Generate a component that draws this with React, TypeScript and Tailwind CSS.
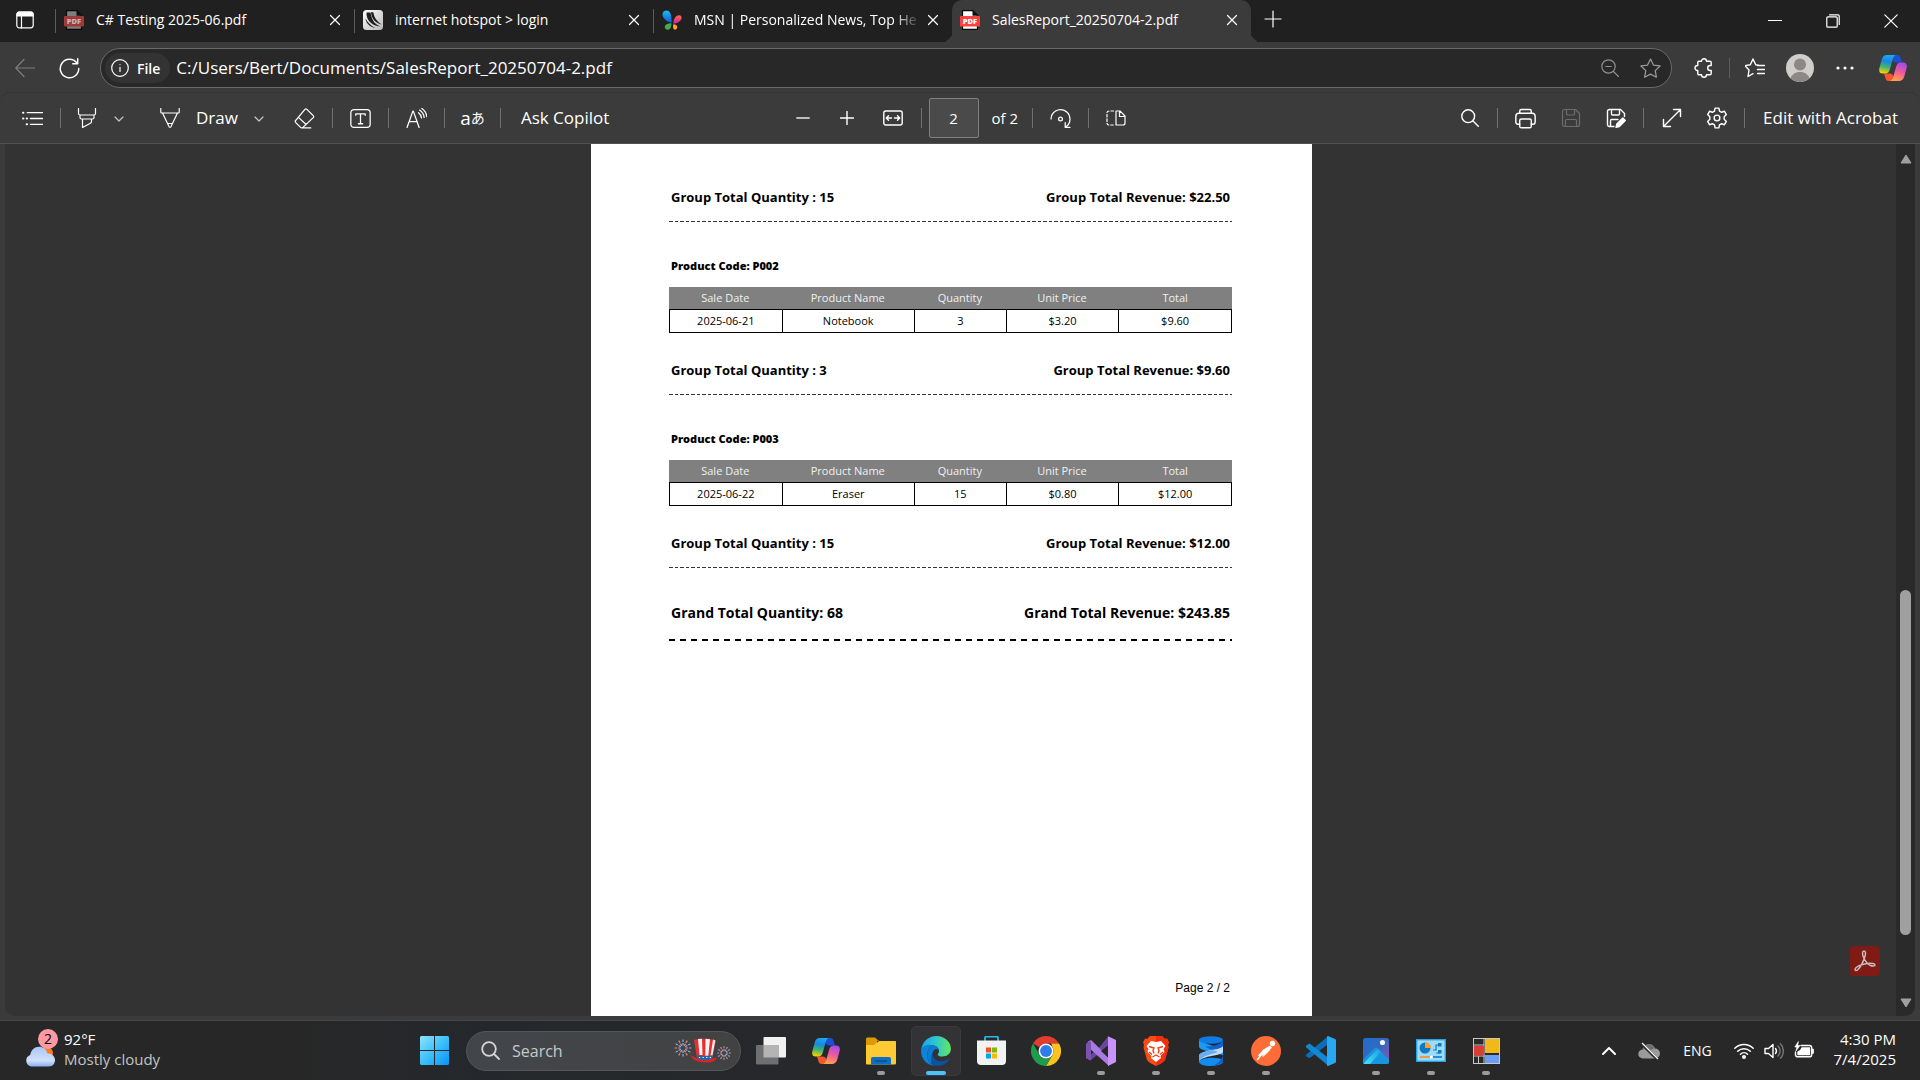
import type { ReactNode } from 'react';

type IconProps = { children: ReactNode; size?: string; box?: string; className?: string };

function Icon({ children, size = 'size-5', box = '0 0 20 20', className = '' }: IconProps) {
  return (
    <svg
      viewBox={box}
      className={`${size} shrink-0 ${className}`}
      fill="none"
      stroke="currentColor"
      strokeWidth={1.2}
      strokeLinecap="round"
      strokeLinejoin="round"
      aria-hidden="true"
    >
      {children}
    </svg>
  );
}

/* ---------- colour logos ---------- */

function PdfFile({ muted = false }: { muted?: boolean }) {
  const red = muted ? '#9e3a3a' : '#fb4141';
  const paper = muted ? '#7d7d7d' : '#ffffff';
  return (
    <svg viewBox="0 0 20 20" className="size-5 shrink-0" aria-hidden="true">
      <path d="M2.500.7h10.300l4.700 4.600v14H2.500z" fill={paper} stroke="#0a0a0a" strokeWidth="1.200" />
      <path d="M12.500.5l5.200 5.200h-5.200z" fill="#111" />
      <rect x="0" y="6" width="20" height="10.500" rx="1" fill={red} />
      <text x="10" y="13.700" textAnchor="middle" fontSize="7.500" fontWeight="800" fontFamily="Open Sans, sans-serif" fill={muted ? '#c9b4b4' : '#fff'}>
        PDF
      </text>
    </svg>
  );
}

function RouterIcon() {
  return (
    <svg viewBox="0 0 20 20" className="size-5 shrink-0" aria-hidden="true">
      <defs>
        <linearGradient id="router" x1="0" y1="0" x2="1" y2="1">
          <stop offset="0" stopColor="#fff" />
          <stop offset="1" stopColor="#b8b8b8" />
        </linearGradient>
      </defs>
      <rect width="20" height="20" rx="3.500" fill="url(#router)" />
      <path d="M3.500 2.500c-.5 7 4.500 13 14 14-5-2-8.500-5-10-14zM8 2c.5 7 4 10.500 10.500 12.500C14.500 11.500 11 8 10.500 2.500zM2.500 8.500c.5 4.500 4 8.500 10 9.500-4-1.800-7.500-5-10-9.500z" fill="#1e1e1e" />
    </svg>
  );
}

function MsnIcon() {
  return (
    <svg viewBox="0 0 21 21" className="size-5 shrink-0" aria-hidden="true">
      <defs>
        <linearGradient id="msnb" x1="0" y1="0" x2="0" y2="1">
          <stop offset="0" stopColor="#19c0f0" />
          <stop offset="1" stopColor="#1457d8" />
        </linearGradient>
        <linearGradient id="msnp" x1="0" y1="0" x2="0" y2="1">
          <stop offset="0" stopColor="#ff6a3c" />
          <stop offset="1" stopColor="#d31fb0" />
        </linearGradient>
      </defs>
      <path d="M5 .5C8.500.5 10 5 10.200 13 6 13.500.5 9 .5 4.500.5 2 2.500.5 5 .5z" fill="url(#msnb)" />
      <path d="M18 5.500c2 0 3 1.500 2.500 3.500-.8 3-5 5.500-8.500 5.300C12 10 14 5.500 18 5.500z" fill="url(#msnp)" />
      <path d="M9.800 14c.3 4-1 6.700-3.800 6.700-2 0-3.300-1.500-3-3.300.4-2.200 3.500-3.400 6.800-3.400z" fill="#3fae49" />
      <path d="M12 15c2.800 0 4.300 1.500 4 3.500-.2 1.600-1.700 2.500-3 2-1.600-.5-1.700-2.800-1-5.500z" fill="#ffa51f" />
    </svg>
  );
}

function CopilotIcon({ id, size }: { id: string; size: string }) {
  return (
    <svg viewBox="0 0 28 26" className={`${size} shrink-0`} aria-hidden="true">
      <defs>
        <linearGradient id={`${id}a`} x1=".5" y1="0" x2=".3" y2="1">
          <stop offset="0" stopColor="#1aa9f3" />
          <stop offset=".35" stopColor="#1987e0" />
          <stop offset=".65" stopColor="#43b56e" />
          <stop offset="1" stopColor="#ffd400" />
        </linearGradient>
        <linearGradient id={`${id}b`} x1=".7" y1="0" x2=".4" y2="1">
          <stop offset="0" stopColor="#a24bea" />
          <stop offset=".5" stopColor="#ef5aa0" />
          <stop offset="1" stopColor="#ffa24d" />
        </linearGradient>
      </defs>
      <path d="M13 0h5.500c2 0 2.600 1.300 3.200 3.300L23 7.500h-5.500c-2.500 0-3.500-1.500-4.500-4z" fill="#1b4fd6" />
      <path d="M14 26H9.500c-2 0-2.600-1.300-3.200-3.300L5 18.500h5.500c2.500 0 3.500 1.500 4.500 4z" fill="#f4572e" />
      <path d="M8 0h9c-1.800.6-2.600 2-3.200 4l-3 10.500c-.8 2.700-2 4-4.800 4H3.500C1 18.500-.3 16.500.3 13.500l2.500-9.300C3.600 1.500 5.300 0 8 0z" fill={`url(#${id}a)`} />
      <path d="M20 26h-9c1.800-.6 2.600-2 3.200-4l3-10.500c.8-2.700 2-4 4.800-4h2.500c2.500 0 3.800 2 3.200 5l-2.500 9.300C24.400 24.500 22.700 26 20 26z" fill={`url(#${id}b)`} />
    </svg>
  );
}

function StartIcon() {
  return (
    <svg viewBox="0 0 29 29" className="size-[29px]" aria-hidden="true">
      <defs>
        <linearGradient id="win" x1="0" y1="0" x2="29" y2="29" gradientUnits="userSpaceOnUse">
          <stop offset="0" stopColor="#8fe3ff" />
          <stop offset=".5" stopColor="#3cc0fa" />
          <stop offset="1" stopColor="#0a93f8" />
        </linearGradient>
      </defs>
      <path d="M1 0h13v14H0V1zM15 0h13l1 1v13H15zM0 15h14v14H1l-1-1zM15 15h14v13l-1 1H15z" fill="url(#win)" />
    </svg>
  );
}

function HatIcon() {
  const rays = [0, 30, 60, 90, 120, 150, 180, 210, 240, 270, 300, 330];
  return (
    <svg viewBox="0 0 58 28" className="h-7 w-[58px]" aria-hidden="true">
      {rays.map((a, i) => (
        <g key={a}>
          <path d="M9 8.500V1.500" transform={`rotate(${a} 9 11)`} stroke={i % 2 ? '#e58a86' : '#7ab2e8'} strokeWidth="1.200" strokeDasharray="2.500 1" />
          <path d="M50 14V8.500" transform={`rotate(${a} 50 16)`} stroke={i % 2 ? '#e58a86' : '#7ab2e8'} strokeWidth="1.100" strokeDasharray="2 .8" />
        </g>
      ))}
      <path d="M16 17c3 5 20 7 27 3-1 4-5 6-12 5.500C22 25 17 22 16 17z" fill="#d92424" />
      <path d="M20 3c5-2 17-1.500 22 .5L38 22c-5 2-10 1.500-15-.5z" fill="#e53030" />
      <path d="M24 2l1.500 16h3L28 1.700zM31.500 1.700l-.2 17h3l1.700-16.500zM39 2.500L36.500 19l1.800.2 3-15.700z" fill="#f5f2f5" />
      <path d="M22.400 17.500c5 2 11 2 16.400.5L38 22c-5 2-10 1.500-15-.5z" fill="#2a62a8" />
      <path d="M25 20.500h12" stroke="#fff" strokeWidth="1.200" strokeDasharray="1.200 2.400" />
    </svg>
  );
}

function TaskViewIcon() {
  return (
    <svg viewBox="0 0 30 28" className="h-7 w-[30px]" aria-hidden="true">
      <rect x="7.500" y="0" width="22.500" height="20.500" rx="1" fill="#f1f1f1" />
      <rect x="0" y="8" width="22.500" height="19.500" rx="1" fill="#6f6f6f" />
      <path d="M7.500 8h15v12.500h-15z" fill="#b4b4b4" />
    </svg>
  );
}

function FolderIcon() {
  return (
    <svg viewBox="0 0 30 28" className="h-7 w-[30px]" aria-hidden="true">
      <path d="M0 2C0 1 .6.5 1.500.5H9L13 4h-2v6H0z" fill="#dc9a04" />
      <path d="M0 8h8l5-4h16c.7 0 1 .4 1 1v21c0 .8-.4 1.500-1.200 1.500H1.200C.4 27.500 0 27 0 26z" fill="#fdc934" />
      <path d="M5 27.500V22c0-1.300.8-2 2-2h16c1.200 0 2 .7 2 2v5.500z" fill="#0d6fc4" />
      <path d="M9 24h12" stroke="#0a4e94" strokeWidth="1.400" />
    </svg>
  );
}

function EdgeIcon() {
  return (
    <svg viewBox="0 0 256 256" className="size-[30px]" aria-hidden="true">
      <defs>
        <linearGradient id="edg1" x1="0" y1="0" x2="1" y2="0">
          <stop offset="0" stopColor="#1aa3ea" />
          <stop offset=".5" stopColor="#30c6cd" />
          <stop offset="1" stopColor="#62e95a" />
        </linearGradient>
      </defs>
      <path d="M2 118C10 48 66 1 130 1c72 0 125 50 125 108 0 44-36 66-72 66-26 0-40-10-40-18 0-7 11-12 11-30 0-24-24-47-58-47C48 80 14 100 2 118z" fill="url(#edg1)" />
      <path d="M96 80c-26 18-42 50-42 84 0 46 32 86 72 90C56 256 0 198 0 128 2 92 40 74 72 74c10 0 18 2 24 6z" fill="#0d83da" />
      <path d="M96 80c34 0 58 23 58 47-4-14-20-22-34-16-24 10-38 84 30 102 36 9 66-4 86-16 4-2 7 1 4 6-24 38-64 55-114 51-40-4-72-44-72-90 0-34 16-66 42-84z" fill="#0d51a3" />
      <path d="M96 80c-26 18-42 50-42 84 0 30 14 56 36 74-8-50-4-100 30-126 12-4 28 0 34 15 0-24-24-47-58-47z" fill="#0c7cd0" />
    </svg>
  );
}

function StoreIcon() {
  return (
    <svg viewBox="0 0 29 29" className="size-[29px]" aria-hidden="true">
      <path d="M8 6V1.800C8 1 8.400.7 9 .7h11c.6 0 1 .4 1 1.100V6" fill="none" stroke="#2ab8ee" strokeWidth="1.800" />
      <path d="M0 4.500h29V25c0 2.500-1.500 4-4 4H4c-2.500 0-4-1.500-4-4z" fill="#f2f2f2" />
      <path d="M9 11.500h5v5H9z" fill="#f25022" />
      <path d="M15 11.500h5v5h-5z" fill="#7fba00" />
      <path d="M9 17.500h5v5H9z" fill="#00a4ef" />
      <path d="M15 17.500h5v5h-5z" fill="#ffb900" />
    </svg>
  );
}

function ChromeIcon() {
  return (
    <svg viewBox="0 0 48 48" className="size-[30px]" aria-hidden="true">
      <path d="M24 0a24 24 0 0 1 20.800 12H24a12 12 0 0 0-10.400 6L3.200 12A24 24 0 0 1 24 0z" fill="#e33b2e" />
      <path d="M44.800 12A24 24 0 0 1 24 48l10.400-18A12 12 0 0 0 34.400 18l-2-6z" fill="#fcc31e" />
      <path d="M24 48A24 24 0 0 1 3.200 12l10.400 18A12 12 0 0 0 27 35.600L34.400 30z" fill="#1f9d4d" />
      <circle cx="24" cy="24" r="12" fill="#fff" />
      <circle cx="24" cy="24" r="9.500" fill="#2f7de9" />
    </svg>
  );
}

function VisualStudioIcon() {
  return (
    <svg viewBox="0 0 30 30" className="size-[30px]" aria-hidden="true">
      <path d="M0 8l3-3 9 8L22 .5V10L4.500 24.500 0 22z" fill="#6a45a0" />
      <path d="M4.500 11.500V19l4-3.800z" fill="#272727" />
      <path d="M2 5.500L5 4l18 17.500V30L2 11z" fill="#a77be0" />
      <path d="M0 8l3-3 2 1v17l-1 1.500L0 22z" fill="#7b52ae" />
      <path d="M22 .3L30 4v22l-8 4V21.500V9.500z" fill="#c893fb" />
      <path d="M22 9.500v12L15 15z" fill="#272727" />
    </svg>
  );
}

function BraveIcon() {
  return (
    <svg viewBox="0 0 26 30" className="h-[30px] w-[26px]" aria-hidden="true">
      <path d="M7 0h12l3 3 2-.5 2 4-1 2 .5 3L22 24c-2 3-6 4.500-9 6-3-1.500-7-3-9-6L.5 11.500l.5-3-1-2 2-4 2 .5z" fill="#fb4a14" />
      <path d="M13 0h6l3 3 2-.5 2 4-1 2 .5 3L22 24c-2 3-6 4.500-9 6z" fill="#ee2f0c" />
      <path d="M8 5l5 1 5-1 4.500 5-2 3 1 3-4 4 .5 2L13 26l-5-4 .5-2-4-4 1-3-2-3z" fill="#fff" />
      <path d="M6 10.500l5 1.500-1 2.500 1 3M20 10.500L15 12l1 2.500-1 3M9.500 21l3.500-2 3.500 2M6 16l3 2.500M20 16l-3 2.500" fill="none" stroke="#f4400f" strokeWidth="1.400" />
    </svg>
  );
}

function DatabaseIcon() {
  return (
    <svg viewBox="0 0 24 30" className="h-[30px] w-6" aria-hidden="true">
      <path d="M0 4v6.500C1 16 17 15 24 19.500V14C22 11 14 10.500 6 7z" fill="#1d9bf2" />
      <path d="M24 10v6C22 20 6 19 0 25v-6c2-4 16-4.500 24-9z" fill="#c3dcfb" />
      <path d="M0 19c2-2.500 8-3.800 13-5l6 2C11 18.500 4 20 0 25z" fill="#69aef5" />
      <path d="M24 4v6c-2 3-9 4-13 3.200L6 10.500C14 10.500 21 9 24 4z" fill="#0c62d0" />
      <ellipse cx="12" cy="4" rx="12" ry="3.800" fill="#0f7be4" />
      <path d="M0 25c5-4 19-4 24-1v2c-1 5-23 5.500-24 0z" fill="#128cf0" />
      <path d="M24 19.500V26c-2 2-5 3-9 3.300C20 27 23 23 24 19.500z" fill="#0a5fd0" />
    </svg>
  );
}

function PostmanIcon() {
  return (
    <svg viewBox="0 0 30 30" className="size-[30px]" aria-hidden="true">
      <circle cx="15" cy="15" r="15" fill="#ff6c37" />
      <circle cx="21.500" cy="7.500" r="2.700" fill="#fff" />
      <path d="M12.500 13.500L19 9.500l2 2-6 6.500-5 1.500z" fill="#fff" />
      <path d="M10.500 18.500L6.500 23.500M13 14L8 19.500M18 14l-6 6" fill="none" stroke="#fff" strokeWidth="1.500" strokeLinecap="round" />
    </svg>
  );
}

function VsCodeIcon() {
  return (
    <svg viewBox="0 0 30 30" className="size-[30px]" aria-hidden="true">
      <path d="M.3 18.500L22 .3v8L3.500 22.300.3 20.500c-.5-.5-.5-1.500 0-2z" fill="#0a6fb8" />
      <path d="M.3 9.500L3.500 7.500 22 21.500v8L.3 11.500c-.5-.5-.5-1.500 0-2z" fill="#1288d2" />
      <path d="M22 0l7 3c.7.300 1 .7 1 1.500v21c0 .8-.3 1.200-1 1.500l-7 3c-.8 0-1-.5-1-1V1.500C21 .5 21 .2 22 0z" fill="#27a9f2" />
    </svg>
  );
}

function PhotosIcon() {
  return (
    <svg viewBox="0 0 26 26" className="size-[26px]" aria-hidden="true">
      <defs>
        <linearGradient id="pho" x1="0" y1="0" x2="1" y2="1">
          <stop offset="0" stopColor="#1c6fce" />
          <stop offset=".5" stopColor="#3767bd" />
          <stop offset="1" stopColor="#9a52b0" />
        </linearGradient>
        <linearGradient id="phm" x1="0" y1="1" x2="1" y2="0">
          <stop offset="0" stopColor="#4be0f8" />
          <stop offset="1" stopColor="#1b9fe4" />
        </linearGradient>
      </defs>
      <rect width="26" height="26" rx="2.500" fill="url(#pho)" />
      <path d="M0 22L11 10.500c1.300-1.300 2.700-1.300 4 0L26 21.500V24c0 1.300-.7 2-2 2H2c-1.300 0-2-.7-2-2z" fill="#1596df" />
      <path d="M.5 25.500L14.500 11 18 13.500 7 26H2z" fill="url(#phm)" />
      <circle cx="19.500" cy="4.500" r="2.600" fill="#f4f8ff" />
    </svg>
  );
}

function ControlPanelIcon() {
  return (
    <svg viewBox="0 0 30 23" className="h-[23px] w-[30px]" aria-hidden="true">
      <rect x=".7" y=".7" width="28.600" height="21.600" fill="#9ddcf8" stroke="#25a5e6" strokeWidth="1.400" />
      <circle cx="9" cy="9" r="5.500" fill="#1379bf" />
      <path d="M9 9V3a6 6 0 0 1 6 6z" fill="#ff9c2a" />
      <path d="M17 11h3V6h3M20 14h4" fill="none" stroke="#1379bf" strokeWidth="1.200" />
      <rect x="22" y="4" width="3.500" height="3.500" fill="#1379bf" />
      <rect x="22" y="11" width="3.500" height="3.500" fill="#1379bf" />
      <path d="M4 18h10" stroke="#ff8a1c" strokeWidth="1.600" />
      <path d="M16 18h10" stroke="#1379bf" strokeWidth="1.600" />
      <circle cx="15.500" cy="18" r="1.500" fill="#fff" />
    </svg>
  );
}

function FormsIcon() {
  return (
    <svg viewBox="0 0 27 26" className="h-[26px] w-[27px]" aria-hidden="true">
      <rect x=".5" y=".5" width="26" height="25" fill="#2b2b2b" stroke="#c9c9c9" />
      <path d="M11 0v26M0 7h11M0 18h27M5.500 18v8" stroke="#c9c9c9" />
      <rect x="12" y="1" width="14" height="14" fill="#f0b818" />
      <rect x="1" y="8" width="9.500" height="9.500" fill="#dc3c34" />
      <rect x="12" y="17" width="14" height="8" fill="#6c9df4" />
    </svg>
  );
}

/* ---------- browser frame ---------- */

type TabInfo = { title: string; icon: ReactNode; active?: boolean; fade?: boolean };

const tabs: TabInfo[] = [
  { title: 'C# Testing 2025-06.pdf', icon: <PdfFile muted /> },
  { title: 'internet hotspot > login', icon: <RouterIcon /> },
  { title: 'MSN | Personalized News, Top He', icon: <MsnIcon />, fade: true },
  { title: 'SalesReport_20250704-2.pdf', icon: <PdfFile />, active: true },
];

function Tab({ title, icon, active, fade }: TabInfo) {
  const frame = active
    ? 'rounded-t-[10px] bg-[#3b3b3b] before:absolute before:bottom-0 before:-left-2.5 before:size-2.5 before:rounded-br-[10px] before:shadow-[4px_4px_0_#3b3b3b] after:absolute after:-right-2.5 after:bottom-0 after:size-2.5 after:rounded-bl-[10px] after:shadow-[-4px_4px_0_#3b3b3b]'
    : '';
  return (
    <div className={`relative flex h-full w-[299px] min-w-0 items-center overflow-y-clip pb-0.5 ${frame}`}>
      {!active && <span className="mt-0.5 h-6 w-px bg-[#5c5c5c]" />}
      <button type="button" className="flex min-w-0 flex-1 items-center gap-3 pl-2 text-left text-[14px] leading-5 whitespace-nowrap">
        {icon}
        <span className={`flex-1 ${fade ? '[mask-image:linear-gradient(to_right,black_88%,transparent)]' : ''}`}>{title}</span>
      </button>
      <button type="button" aria-label={`Close ${title}`} className="mr-[7px] grid h-6 w-6 place-items-center">
        <Icon size="size-3" box="0 0 12 12"><path d="M1.500 1.500l9 9M10.500 1.500l-9 9" /></Icon>
      </button>
    </div>
  );
}

function TabStrip() {
  return (
    <header className="flex h-[42px] shrink-0 items-center">
      <button type="button" aria-label="Workspaces" className="grid h-full w-[55px] place-items-center pr-1.5 pb-0.5">
        <Icon size="size-[18px]" box="0 0 18 18">
          <rect x=".8" y="1.200" width="16.400" height="15.600" rx="2.500" />
          <path d="M1 5h16V3.500C17 2 16.500 1.200 15 1.200H3C1.500 1.200 1 2 1 3.500z" fill="currentColor" />
          <path d="M5.500 5v12" />
        </Icon>
      </button>
      <nav className="flex h-full min-w-0 items-center" aria-label="Tabs">
        {tabs.map((t) => (
          <Tab key={t.title} {...t} />
        ))}
      </nav>
      <button type="button" aria-label="New tab" className="ml-1.5 grid h-8 w-8 place-items-center pb-1">
        <Icon size="size-[18px]" box="0 0 18 18"><path d="M9 1v16M1 9h16" /></Icon>
      </button>
      <div className="ml-auto flex h-full">
        <button type="button" aria-label="Minimize" className="grid w-[58px] place-items-center">
          <Icon size="size-[14px]" box="0 0 14 14"><path d="M.5 6.500h13" /></Icon>
        </button>
        <button type="button" aria-label="Restore" className="grid w-[58px] place-items-center">
          <Icon size="size-[14px]" box="0 0 14 14">
            <rect x=".8" y="2.800" width="10.400" height="10.400" rx="1" />
            <path d="M3.500.8H12c.7 0 1.200.5 1.200 1.200v8.500" />
          </Icon>
        </button>
        <button type="button" aria-label="Close window" className="grid w-[58px] place-items-center">
          <Icon size="size-[14px]" box="0 0 14 14"><path d="M.8.8l12.400 12.400M13.200.8L.8 13.200" /></Icon>
        </button>
      </div>
    </header>
  );
}

function AddressBar() {
  return (
    <div className="flex h-[50px] shrink-0 items-center bg-[#3b3b3b] pt-0.5 pr-[7px] pl-0.5">
      <button type="button" aria-label="Back" className="grid h-9 w-[45px] place-items-center text-[#7c7c7c]">
        <Icon><path d="M19.500 10H1M9 1.500L.8 10 9 18.500" /></Icon>
      </button>
      <button type="button" aria-label="Refresh" className="grid h-9 w-[45px] place-items-center">
        <Icon size="size-[21px]" className="[stroke-width:1.400]"><path d="M18.800 10A8.800 8.800 0 1 1 17 4.700M17.800.8v4.700h-4.700" /></Icon>
      </button>
      <div className="ml-2 flex h-10 min-w-0 flex-1 items-center rounded-full border border-[#6a6a6a] bg-[#282828] pr-px pl-1">
        <button type="button" className="flex h-[30px] items-center gap-2 rounded-full bg-[#333333] pr-2.5 pl-1.5 text-[14px] font-semibold">
          <Icon size="size-[18px]" box="0 0 18 18">
            <circle cx="9" cy="9" r="8.300" />
            <path d="M9 8.300v4.200M9 5.500v.1" />
          </Icon>
          File
        </button>
        <input
          aria-label="Address"
          defaultValue="C:/Users/Bert/Documents/SalesReport_20250704-2.pdf"
          className="ml-1.5 min-w-0 flex-1 bg-transparent text-[17px] leading-6 outline-none"
        />
        <button type="button" aria-label="Zoom out" className="grid h-8 w-10 place-items-center text-[#8f8f8f]">
          <Icon size="size-[18px]" box="0 0 18 18">
            <circle cx="7.500" cy="7.500" r="6.700" />
            <path d="M12.500 12.500l5 5M4.800 7.500h5.400" />
          </Icon>
        </button>
        <button type="button" aria-label="Add to favorites" className="grid h-8 w-10 place-items-center text-[#9a9a9a]">
          <Icon size="size-[21px]"><path d="M10 1l2.800 5.700 6.300.9-4.600 4.400 1.100 6.300L10 15.400l-5.600 2.900L5.500 12 .9 7.600l6.300-.9z" /></Icon>
        </button>
      </div>
      <button type="button" aria-label="Extensions" className="ml-3 grid h-9 w-10 place-items-center">
        <Icon className="[stroke-width:1.400]">
          <path d="M7.500 3.200a2.500 2.500 0 0 1 5 0H16c.7 0 1.200.5 1.200 1.200v3.100h-1a2.500 2.500 0 0 0 0 5h1v3.100c0 .7-.5 1.200-1.200 1.200h-3.500a2.500 2.500 0 0 1-5 0H5c-.7 0-1.200-.5-1.200-1.200V12.500h-.3a2.500 2.500 0 0 1 0-5h.3V4.400c0-.7.5-1.200 1.200-1.200z" />
        </Icon>
      </button>
      <span className="mx-[5px] h-5 w-px bg-[#5c5c5c]" />
      <div className="flex items-center gap-[5px]">
        <button type="button" aria-label="Favorites" className="grid h-9 w-10 place-items-center">
          <Icon className="[stroke-width:1.400]">
            <path d="M13.500 7.200l-2.800-.4L8 1 5.300 6.800 0 7.600l4 4.400-1 6.500 5-2.800M12.500 7.500h7M12.500 11.500h7M12.500 15.500h7" />
          </Icon>
        </button>
        <button type="button" aria-label="Profile" className="grid h-9 w-10 place-items-center">
          <svg viewBox="0 0 28 28" className="size-7" aria-hidden="true">
            <circle cx="14" cy="14" r="14" fill="#d0cecb" />
            <circle cx="14" cy="10.500" r="6" fill="#8b8886" />
            <path d="M4.500 24.200C6.500 19.500 10 18 14 18s7.500 1.500 9.500 6.200A14 14 0 0 1 14 28a14 14 0 0 1-9.500-3.800z" fill="#8b8886" />
          </svg>
        </button>
        <button type="button" aria-label="Settings and more" className="grid h-9 w-10 place-items-center">
          <svg viewBox="0 0 18 4" className="h-1 w-[18px]" fill="currentColor" aria-hidden="true">
            <circle cx="2" cy="2" r="1.600" />
            <circle cx="9" cy="2" r="1.600" />
            <circle cx="16" cy="2" r="1.600" />
          </svg>
        </button>
      </div>
      <button type="button" aria-label="Copilot" className="ml-2 grid h-9 w-10 place-items-center">
        <CopilotIcon id="top" size="h-[26px] w-7" />
      </button>
    </div>
  );
}

/* ---------- PDF toolbar ---------- */

function Divider({ className = 'mx-3' }: { className?: string }) {
  return <span className={`h-5 w-px shrink-0 bg-[#707070] ${className}`} />;
}

function Tool({ label, children, className = 'w-[31px]' }: { label: string; children: ReactNode; className?: string }) {
  return (
    <button type="button" aria-label={label} className={`grid h-8 shrink-0 place-items-center ${className}`}>
      {children}
    </button>
  );
}

const chevron = (
  <Icon size="size-2.5" box="0 0 10 10" className="text-[#c4c4c4]"><path d="M1 4l4 4 4-4" /></Icon>
);

function PdfToolbar() {
  return (
    <div className="grid h-[52px] shrink-0 grid-cols-[1fr_auto_1fr] items-center rounded-t-[10px] border-t border-b border-t-[#363636] border-b-[#525252] bg-[#3b3b3b] text-[17px] leading-6">
      <div className="flex items-center pl-[17px]">
        <Tool label="Contents">
          <Icon size="size-[21px]"><path d="M5 4.500h14.500M8 10h11.500M8 15.500h11.500" /><path d="M1 4.500h.3M1 10h.3M4.500 10h.3M4.500 15.500h.3" strokeWidth="2" /></Icon>
        </Tool>
        <Divider />
        <Tool label="Highlight" className="w-7">
          <Icon><path d="M1.500.5v5c0 1 .5 1.500 1.500 1.500h14c1 0 1.500-.5 1.500-1.500v-5M3 7v2.500c0 1 .5 1.500 1.500 1.500h11c1 0 1.500-.5 1.500-1.500V7M5.500 11v8.500l7.500-4c1-.5 1.500-1 1.500-2V11" /></Icon>
        </Tool>
        <Tool label="Highlight options" className="ml-1.5 w-6">{chevron}</Tool>
        <button type="button" className="ml-7 flex items-center gap-4 px-px">
          <Icon><path d="M.8.5v3.800c0 .5.300.7.700.7h17c.4 0 .7-.2.700-.7V.5M2.500 5l6 12.500c.500 2.500 2.500 2.500 3 0l6-12.500M7.800 15.500h4.400" /></Icon>
          Draw
        </button>
        <Tool label="Draw options" className="ml-2 w-6">{chevron}</Tool>
        <Tool label="Erase" className="ml-[18px] w-[31px]">
          <Icon size="size-[21px]"><path d="M12.300 1.300l6 6c.6.600.6 1.300 0 1.900l-9.500 9c-.8.800-2 .8-2.800 0l-4.300-4.300c-.7-.7-.7-1.500 0-2.200l8.700-10.400c.600-.600 1.300-.600 1.900 0zM4.500 9.200l7 6.500M8 19h8" /></Icon>
        </Tool>
        <Divider />
        <Tool label="Add text">
          <Icon size="size-[21px]"><rect x=".8" y="1.500" width="18.400" height="17" rx="3" /><path d="M5.500 7V5.500h9V7M10 5.500v9.500M8 15h4" /></Icon>
        </Tool>
        <Divider />
        <Tool label="Read aloud">
          <Icon size="size-[21px]"><path d="M1 18.500L6.500 3h.5l5.500 15.500M3 13h7.500M12 4.500c1.500 1.200 2.500 3 2.800 5M13 2c2.500 1.800 4 4 4.300 7M15 .3c2.800 2 4.500 4.500 4.800 8" /></Icon>
        </Tool>
        <Divider />
        <button type="button" aria-label="Translate" className="flex h-8 w-[31px] items-center justify-center font-['Open_Sans','Noto_Sans_CJK_JP',sans-serif]">
          <span className="text-[19px] leading-none">a</span>
          <span className="text-[14px] leading-none">あ</span>
        </button>
        <Divider />
        <button type="button" className="px-2 whitespace-nowrap">Ask Copilot</button>
      </div>

      <div className="flex items-center pr-0.5">
        <Tool label="Zoom out" className="w-8">
          <Icon size="size-3.5" box="0 0 14 14"><path d="M1 7h12" strokeWidth="1.800" stroke="#bdbdbd" /></Icon>
        </Tool>
        <Tool label="Zoom in" className="ml-3 w-8">
          <Icon size="size-3.5" box="0 0 14 14" className="[stroke-width:1.400]"><path d="M7 .5v13M.5 7h13" /></Icon>
        </Tool>
        <Tool label="Fit to width" className="ml-3.5 w-8">
          <Icon className="[stroke-width:1.400]"><rect x=".8" y="3" width="18.400" height="14" rx="2" /><path d="M8.500 10H3.500M5.500 7.800L3.300 10l2.200 2.200M11.500 10h5M14.500 7.800l2.200 2.200-2.200 2.200" /></Icon>
        </Tool>
        <Divider className="mr-[7px] ml-3" />
        <input
          aria-label="Page number"
          defaultValue="2"
          className="h-10 w-[50px] rounded-[2px] border border-[#808080] bg-[#4a4a4a] text-center text-[15px] outline-none"
        />
        <span className="ml-[13px] w-7 text-[15px] whitespace-nowrap">of 2</span>
        <Divider />
        <Tool label="Rotate">
          <Icon size="size-[21px]"><path d="M1 10.500a9 9 0 1 1 14.500 7.200M19 18.500h-4.500v-4.500" /><circle cx="10" cy="10.500" r="1.800" /></Icon>
        </Tool>
        <Divider />
        <Tool label="Page view">
          <Icon><path d="M10 3h4l5 5v7c0 1.200-.8 2-2 2h-7zM13.500 3v5.500H19" /><path d="M7.500 3H3C1.800 3 1 3.800 1 5v10c0 1.200.8 2 2 2h4.500" strokeDasharray="2.500 2" /></Icon>
        </Tool>
      </div>

      <div className="flex items-center justify-end pr-3.5">
        <Tool label="Find">
          <Icon size="size-[18px]" box="0 0 18 18" className="[stroke-width:1.400]"><circle cx="7.200" cy="7.200" r="6.400" /><path d="M12 12l5.300 5.300" /></Icon>
        </Tool>
        <Divider />
        <div className="flex gap-3.5">
          <Tool label="Print">
            <Icon size="size-[21px]" className="[stroke-width:1.350]"><path d="M4.500 5V3c0-.8.500-1.500 1.500-1.500h8c1 0 1.500.7 1.500 1.500v2M4.500 15.500H3c-1.300 0-2.200-1-2.200-2.200V8C.8 6.300 2 5 3.700 5h12.600C18 5 19.200 6.300 19.200 8v5.300c0 1.200-.9 2.200-2.200 2.200h-1.500" /><rect x="4.500" y="10.500" width="11" height="8.300" rx="1.500" /></Icon>
          </Tool>
          <Tool label="Save" className="w-[31px] text-[#6c6c6c]">
            <Icon><path d="M1.500 3.500c0-1.200.8-2 2-2h11l4 4v11c0 1.200-.8 2-2 2h-13c-1.200 0-2-.8-2-2zM5.500 1.500V6c0 .600.400 1 1 1h6c.600 0 1-.400 1-1V1.500M4.500 18.500v-6c0-.6.400-1 1-1h9c.6 0 1 .4 1 1v6" /></Icon>
          </Tool>
          <Tool label="Save as">
            <Icon className="[stroke-width:1.400]"><path d="M8 18.500H3.500c-1.200 0-2-.8-2-2v-13c0-1.200.8-2 2-2h11l4 4v3M5.500 1.500V6c0 .6.400 1 1 1h6c.6 0 1-.4 1-1V1.500M4.500 18.500v-6c0-.600.400-1 1-1h6.500" /><path d="M10 19.300l.8-3.200 6-6.100 2.500 2.500-6 6z" fill="currentColor" /></Icon>
          </Tool>
        </div>
        <Divider />
        <div className="flex gap-3.5">
          <Tool label="Full screen">
            <Icon className="[stroke-width:1.400]"><path d="M1.500 18.500l17-17M11.500 1.500h7v7M1.500 11.500v7h7" /></Icon>
          </Tool>
          <Tool label="Settings">
            <Icon size="size-[22px]" className="[stroke-width:1.300]">
              <circle cx="10" cy="10" r="2.600" />
              <path d="M8.300 1h3.400l.6 2.700 1.900 1.100 2.600-.9 1.700 3-2 1.900v2.400l2 1.900-1.700 3-2.600-.9-1.900 1.100-.6 2.700H8.300l-.6-2.700-1.900-1.100-2.600.9-1.700-3 2-1.900V8.800l-2-1.900 1.700-3 2.600.9 1.900-1.100z" />
            </Icon>
          </Tool>
        </div>
        <Divider />
        <button type="button" className="pr-2 pl-1.5 whitespace-nowrap">Edit with Acrobat</button>
      </div>
    </div>
  );
}

/* ---------- report page ---------- */

const headings = ['Sale Date', 'Product Name', 'Quantity', 'Unit Price', 'Total'];

function Dashes() {
  return <div className="mt-3.5 h-px bg-[repeating-linear-gradient(to_right,#333_0_4px,transparent_4px_6px,#333_6px_9px,transparent_9px_11px)]" />;
}

function GroupTotals({ quantity, revenue, className }: { quantity: string; revenue: string; className: string }) {
  return (
    <>
      <div className={`flex justify-between px-0.5 text-[13px] leading-5 font-bold ${className}`}>
        <span>Group Total Quantity : {quantity}</span>
        <span>Group Total Revenue: {revenue}</span>
      </div>
      <Dashes />
    </>
  );
}

function ProductGroup({ code, cells }: { code: string; cells: string[] }) {
  return (
    <section>
      <h2 className="mt-[34px] px-0.5 text-[11px] leading-5 font-extrabold">Product Code: {code}</h2>
      <table aria-label={`Sales for ${code}`} className="mt-[11px] w-full table-fixed border-separate border-spacing-0 text-[11px] leading-[22px]">
        <colgroup>
          <col className="w-[20%]" />
          <col className="w-[23.500%]" />
          <col className="w-[16.300%]" />
          <col className="w-[20%]" />
          <col />
        </colgroup>
        <thead>
          <tr className="bg-[#808080] text-[#f0f0f0]">
            {headings.map((h) => (
              <th key={h} scope="col" className="p-0 font-normal">{h}</th>
            ))}
          </tr>
        </thead>
        <tbody>
          <tr>
            {cells.map((c) => (
              <td key={c} className="border-y border-l border-black p-0 text-center last:border-r">{c}</td>
            ))}
          </tr>
        </tbody>
      </table>
    </section>
  );
}

function ReportPage() {
  return (
    <article className="flex w-[721px] flex-col bg-white pr-20 pl-[78px] text-black">
      <GroupTotals quantity="15" revenue="$22.50" className="mt-[43px]" />
      <ProductGroup code="P002" cells={['2025-06-21', 'Notebook', '3', '$3.20', '$9.60']} />
      <GroupTotals quantity="3" revenue="$9.60" className="mt-[27px]" />
      <ProductGroup code="P003" cells={['2025-06-22', 'Eraser', '15', '$0.80', '$12.00']} />
      <GroupTotals quantity="15" revenue="$12.00" className="mt-[27px]" />
      <div className="mt-[35px] flex justify-between px-0.5 text-[14px] leading-5 font-bold">
        <span>Grand Total Quantity: 68</span>
        <span>Grand Total Revenue: $243.85</span>
      </div>
      <div className="mt-4 h-0.5 bg-[repeating-linear-gradient(to_right,#000_0_6px,transparent_6px_11px)]" />
      <footer className="mt-auto mb-[18px] px-0.5 text-right font-['Liberation_Sans',sans-serif] text-[12px] leading-5">Page 2 / 2</footer>
    </article>
  );
}

function Viewer() {
  return (
    <main className="relative mx-[5px] flex min-h-0 flex-1 overflow-hidden rounded-b-[10px] bg-[#333333]">
      <div className="flex min-w-0 flex-1 justify-center pl-0.5">
        <ReportPage />
      </div>
      <div className="flex w-[19px] flex-col items-center bg-[#2a2a2a] pt-2.5 pb-2" aria-hidden="true">
        <svg viewBox="0 0 12 10" className="h-2.5 w-3"><path d="M6 1l5 8H1z" fill="#a0a0a0" stroke="#a0a0a0" strokeLinejoin="round" /></svg>
        <div className="grow-[427]" />
        <div className="w-[11px] grow-[345] rounded-full bg-[#9f9f9f]" />
        <div className="grow-[63]" />
        <svg viewBox="0 0 12 10" className="h-2.5 w-3"><path d="M6 9L1 1h10z" fill="#a0a0a0" stroke="#a0a0a0" strokeLinejoin="round" /></svg>
      </div>
      <button type="button" aria-label="Open in Acrobat" className="absolute right-[35px] bottom-10 grid size-[30px] place-items-center rounded bg-[#7f1a15] text-[#c9bcbb]">
        <Icon size="size-[22px]" box="0 0 22 22" className="[stroke-width:1.500]">
          <path d="M10 1c1.500 0 1.800 2 1.200 4.500C10 11 6 18 3.500 20c-1.200 1-2.700.5-2.500-.8.300-2 5.500-4.800 12-5.700 4.500-.600 8 0 8 1.500 0 1.300-2.500 1.300-5 .2C12 13.300 8.300 7 8.500 3c.1-1.300.6-2 1.500-2z" />
        </Icon>
      </button>
    </main>
  );
}

/* ---------- taskbar ---------- */

type AppInfo = { name: string; icon: ReactNode; state: 'closed' | 'open' | 'active' };

const apps: AppInfo[] = [
  { name: 'Task view', icon: <TaskViewIcon />, state: 'closed' },
  { name: 'Copilot', icon: <CopilotIcon id="bar" size="h-[26px] w-7" />, state: 'closed' },
  { name: 'File Explorer', icon: <FolderIcon />, state: 'open' },
  { name: 'Microsoft Edge', icon: <EdgeIcon />, state: 'active' },
  { name: 'Microsoft Store', icon: <StoreIcon />, state: 'closed' },
  { name: 'Google Chrome', icon: <ChromeIcon />, state: 'closed' },
  { name: 'Visual Studio', icon: <VisualStudioIcon />, state: 'open' },
  { name: 'Brave', icon: <BraveIcon />, state: 'open' },
  { name: 'Database', icon: <DatabaseIcon />, state: 'open' },
  { name: 'Postman', icon: <PostmanIcon />, state: 'open' },
  { name: 'Visual Studio Code', icon: <VsCodeIcon />, state: 'closed' },
  { name: 'Photos', icon: <PhotosIcon />, state: 'open' },
  { name: 'Control Panel', icon: <ControlPanelIcon />, state: 'open' },
  { name: 'Windows Forms', icon: <FormsIcon />, state: 'open' },
];

function AppButton({ name, icon, state }: AppInfo) {
  return (
    <button
      type="button"
      aria-label={name}
      className={`relative grid size-[50px] shrink-0 place-items-center rounded-[5px] ${state === 'active' ? 'border border-[#3a3a3d] bg-[#333336]' : ''}`}
    >
      {icon}
      {state === 'open' && <span className="absolute bottom-px h-1 w-2 rounded-full bg-[#9b9b9b]" />}
      {state === 'active' && <span className="absolute bottom-0 h-1 w-5 rounded-full bg-[#4cc2ff]" />}
    </button>
  );
}

function Taskbar() {
  return (
    <footer className="grid h-[60px] shrink-0 grid-cols-[1fr_auto_1fr] items-center border-t border-[#474747] bg-linear-to-r from-[#272727] from-15% via-[#24282c] via-25% to-[#282828] to-60%">
      <button type="button" className="flex items-center gap-2 justify-self-start pb-1 pl-[25px] text-left text-[15px] leading-5">
        <span className="relative block h-9 w-[31px]">
          <svg viewBox="0 0 31 21" className="absolute bottom-0 left-0 h-[21px] w-[31px]" aria-hidden="true">
            <defs>
              <linearGradient id="cloud" x1="0" y1="0" x2="0" y2="1">
                <stop offset="0" stopColor="#a9c6f5" />
                <stop offset=".7" stopColor="#cfe0fb" />
                <stop offset="1" stopColor="#89aef0" />
              </linearGradient>
            </defs>
            <circle cx="22" cy="7" r="6" fill="#ff7a1c" />
            <path d="M6 20.500a6 6 0 0 1-.8-11.500C6 4 9.500.8 14 .8s7.500 2.700 8.300 6.400c5 .2 7.700 3.300 7.700 6.800 0 3.700-2.500 6.500-6 6.500z" fill="url(#cloud)" />
          </svg>
          <span className="absolute -top-0.5 -right-0.5 grid size-5 place-items-center rounded-full bg-[#ff99a4] text-[14px] leading-none text-black">2</span>
        </span>
        <span>
          <span className="block">92°F</span>
          <span className="block text-[#c4c4c4]">Mostly cloudy</span>
        </span>
      </button>

      <div className="flex items-center">
        <button type="button" aria-label="Start" className="grid size-[50px] place-items-center"><StartIcon /></button>
        <label className="mr-[5px] ml-[7px] flex h-10 w-[275px] items-center rounded-full border border-[#54565a] bg-linear-to-r from-[#42464b] to-[#424242] pr-2 pl-3.5">
          <Icon size="size-[19px]" box="0 0 19 19" className="text-[#d5d5d5] [stroke-width:1.800]"><circle cx="8" cy="8" r="6.800" /><path d="M13 13l5 5" /></Icon>
          <input
            aria-label="Search"
            placeholder="Search"
            className="ml-3 w-0 min-w-0 flex-1 bg-transparent text-[16px] leading-6 outline-none placeholder:text-[#c8c8c8]"
          />
          <HatIcon />
        </label>
        <div className="flex gap-[5px]">
          {apps.map((a) => (
            <AppButton key={a.name} {...a} />
          ))}
        </div>
      </div>

      <div className="flex items-center justify-end pr-6">
        <button type="button" aria-label="Show hidden icons">
          <Icon size="size-3.5" box="0 0 14 14" className="[stroke-width:2]"><path d="M1 10l6-6 6 6" /></Icon>
        </button>
        <button type="button" aria-label="OneDrive" className="ml-[22px]">
          <svg viewBox="0 0 22 18" className="h-[18px] w-[22px]" aria-hidden="true">
            <path d="M5 16.500a4.500 4.500 0 0 1-.5-9A6.500 6.500 0 0 1 17 6.500a5 5 0 0 1 0 10z" fill="#9a9a9a" />
            <path d="M4.500 7.500A6.500 6.500 0 0 1 17 6.500c-3 0-4 1.500-5 3.500-2-2-4-3-7.500-2.500z" fill="#6f6f6f" />
            <path d="M3.500 1.500l16 16" stroke="#272727" strokeWidth="3" />
            <path d="M4 1l16 16" stroke="#fff" strokeWidth="1.300" />
          </svg>
        </button>
        <button type="button" className="ml-[22px] w-8 text-center text-[14px]">ENG</button>
        <button type="button" aria-label="Network, volume and battery" className="ml-5 flex gap-2.5">
          <Icon className="[stroke-width:1.500]">
            <path d="M.8 7.300a13 13 0 0 1 18.400 0M3.700 10.300a9 9 0 0 1 12.600 0M6.500 13.200a5 5 0 0 1 7 0" />
            <circle cx="10" cy="16" r="1.300" fill="currentColor" />
          </Icon>
          <Icon className="[stroke-width:1.400]">
            <path d="M1 7.500v5h3.500l4.500 4V3.500l-4.500 4zM11.500 7.500a4 4 0 0 1 0 5" />
            <path d="M14 5a7 7 0 0 1 0 10M16.500 2.800a10.500 10.500 0 0 1 0 14.400" stroke="#777" />
          </Icon>
          <Icon className="[stroke-width:1.400]">
            <path d="M7 4.500h8.500c1.400 0 2.200.8 2.200 2.200v7c0 1.300-.8 2.100-2.200 2.100H3.700c-1.300 0-2.200-.8-2.200-2.100V11M18.200 8.500h1v3.500h-1" />
            <path d="M8 7h7.500v6.500H4V11c2-.5 3.500-2 4-4z" fill="currentColor" />
            <path d="M4.200.8L.8 6h2L2 10l4-5.500H4z" fill="currentColor" strokeWidth=".6" />
          </Icon>
        </button>
        <button type="button" className="ml-5 pb-1 text-right text-[15px] leading-5 whitespace-nowrap">
          <span className="block">4:30 PM</span>
          <span className="block">7/4/2025</span>
        </button>
      </div>
    </footer>
  );
}

export default function App() {
  return (
    <div className="flex h-screen flex-col overflow-hidden bg-[#202020] font-['Open_Sans','Noto_Sans',sans-serif] text-white">
      <TabStrip />
      <AddressBar />
      <div className="flex min-h-0 flex-1 flex-col bg-[#3b3b3b] pb-1">
        <PdfToolbar />
        <Viewer />
      </div>
      <Taskbar />
    </div>
  );
}
